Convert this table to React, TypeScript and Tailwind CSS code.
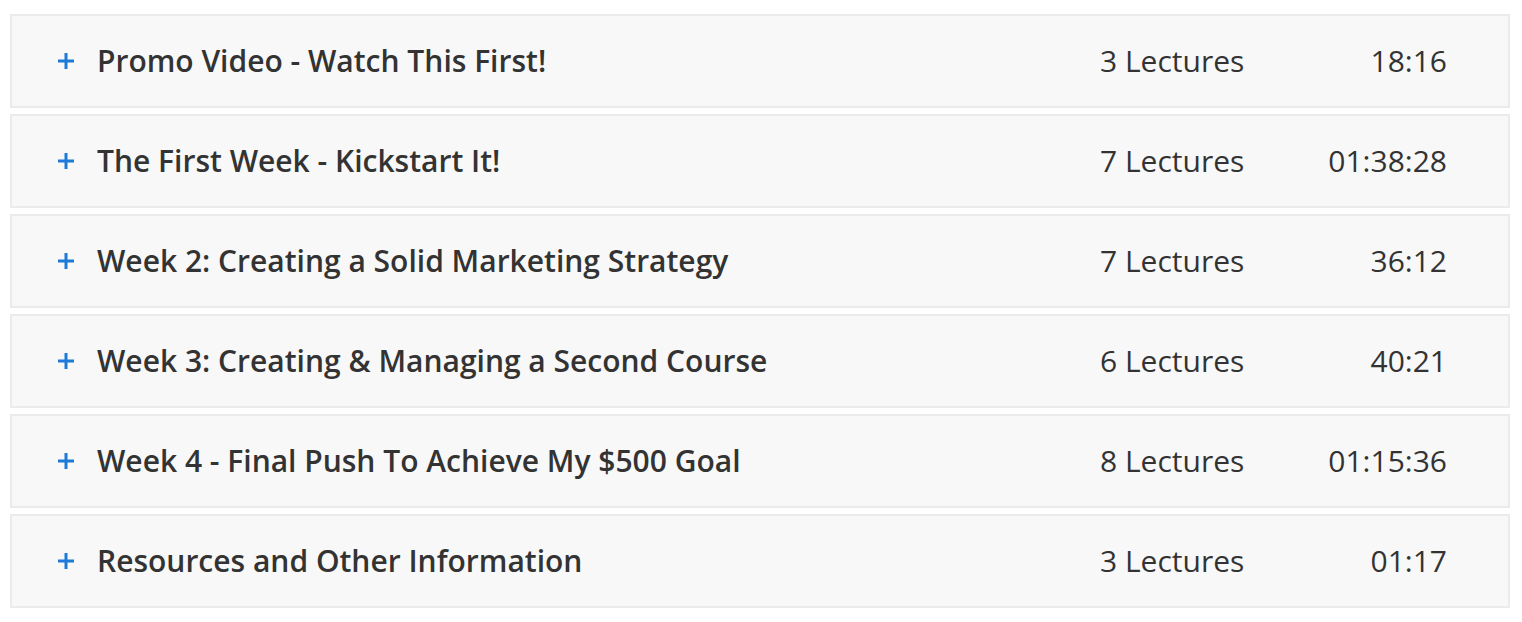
const sections = [
  { title: "Promo Video - Watch This First!", lectures: 3, duration: "18:16" },
  { title: "The First Week - Kickstart It!", lectures: 7, duration: "01:38:28" },
  { title: "Week 2: Creating a Solid Marketing Strategy", lectures: 7, duration: "36:12" },
  { title: "Week 3: Creating & Managing a Second Course", lectures: 6, duration: "40:21" },
  { title: "Week 4 - Final Push To Achieve My $500 Goal", lectures: 8, duration: "01:15:36" },
  { title: "Resources and Other Information", lectures: 3, duration: "01:17" },
];

function PlusIcon() {
  return (
    <svg width="18" height="18" viewBox="0 0 18 18" className="shrink-0">
      <path d="M9 1v16M1 9h16" stroke="#1d7ad6" strokeWidth="3" fill="none" />
    </svg>
  );
}

export default function App() {
  return (
    <div
      className="flex min-h-screen flex-col gap-[6px] bg-white pl-[10px] pr-[12px] pt-[14px] text-[#333333]"
      style={{ fontFamily: '"Open Sans", "Liberation Sans", sans-serif' }}
    >
      {sections.map((s) => (
        <div
          key={s.title}
          className="flex h-[94px] items-center border-2 border-[#ebebeb] bg-[#f8f8f8] pl-[45px] pr-[61px]"
        >
          <PlusIcon />
          <div className="ml-[22px] flex-1 text-[30px] font-semibold leading-none">{s.title}</div>
          <div className="w-[200px] text-[30px] leading-none">{s.lectures} Lectures</div>
          <div className="w-[147px] text-right text-[30px] leading-none">{s.duration}</div>
        </div>
      ))}
    </div>
  );
}
